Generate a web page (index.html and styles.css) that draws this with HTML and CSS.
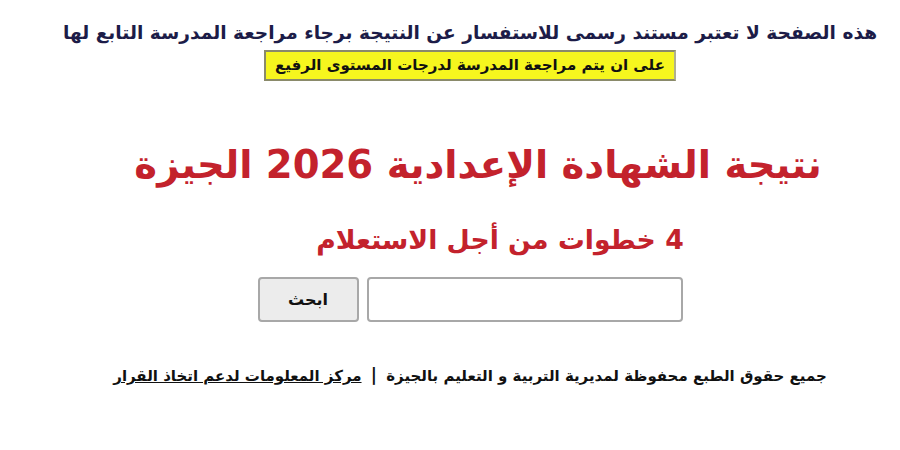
FILE: index.html
```html
<!DOCTYPE html>
<html lang="ar" dir="rtl">
<head>
<meta charset="utf-8">
<link rel="stylesheet" href="styles.css">
</head>
<body>
<main class="page">
  <p class="notice">هذه الصفحة لا تعتبر مستند رسمى للاستفسار عن النتيجة برجاء مراجعة المدرسة التابع لها</p>
  <p class="note"><span class="note-box">على ان يتم مراجعة المدرسة لدرجات المستوى الرفيع</span></p>
  <h1 class="title">نتيجة الشهادة الإعدادية 2026 الجيزة</h1>
  <h2 class="subtitle">4 خطوات من أجل الاستعلام</h2>
  <form class="search">
    <input class="search-input" type="text">
    <button class="search-btn" type="button">ابحث</button>
  </form>
  <p class="footer">جميع حقوق الطبع محفوظة لمديرية التربية و التعليم بالجيزة <span class="sep">|</span> <a class="footer-link" href="#">مركز المعلومات لدعم اتخاذ القرار</a></p>
</main>
</body>
</html>
```
FILE: styles.css
```css
html, body {
  margin: 0;
  padding: 0;
  background: #fff;
}
body {
  font-family: "DejaVu Sans", "Noto Sans", sans-serif;
  width: 900px;
  height: 450px;
  overflow: hidden;
}
.page {
  display: flex;
  flex-direction: column;
  align-items: center;
  padding: 19px 0 0 40px;
  text-align: center;
}
.notice {
  margin: 0;
  font-size: 18.6px;
  font-weight: bold;
  color: #1c1c48;
  line-height: 28px;
}
.note {
  margin: 3px 0 0;
}
.note-box {
  display: inline-block;
  background: #f6f61e;
  border: 2px solid #8a8a6a;
  border-right-color: #b0b090;
  padding: 0 9px;
  font-size: 15px;
  font-weight: bold;
  color: #111;
  line-height: 27px;
}
.title {
  margin: 55px 0 0 16px;
  font-size: 38.6px;
  font-weight: bold;
  color: #c3222c;
  line-height: 58px;
}
.subtitle {
  margin: 26px 0 0 60px;
  font-size: 26.7px;
  font-weight: bold;
  color: #c3222c;
  line-height: 40px;
}
.search {
  display: flex;
  gap: 8px;
  margin-top: 17px;
}
.search-input {
  width: 316px;
  height: 45px;
  box-sizing: border-box;
  border: 2px solid #a8a8a8;
  border-radius: 4px;
  background: #fff;
}
.search-btn {
  width: 101px;
  height: 45px;
  border: 2px solid #a8a8a8;
  border-radius: 4px;
  background: #ececec;
  font-family: "DejaVu Sans", sans-serif;
  font-weight: bold;
  font-size: 16px;
  color: #111;
}
.footer {
  margin: 43px 0 0;
  font-size: 15px;
  font-weight: bold;
  color: #111;
}
.sep {
  font-size: 17px;
  margin: 0 4px;
}
.footer-link {
  color: #111;
  text-decoration: underline;
}
```
